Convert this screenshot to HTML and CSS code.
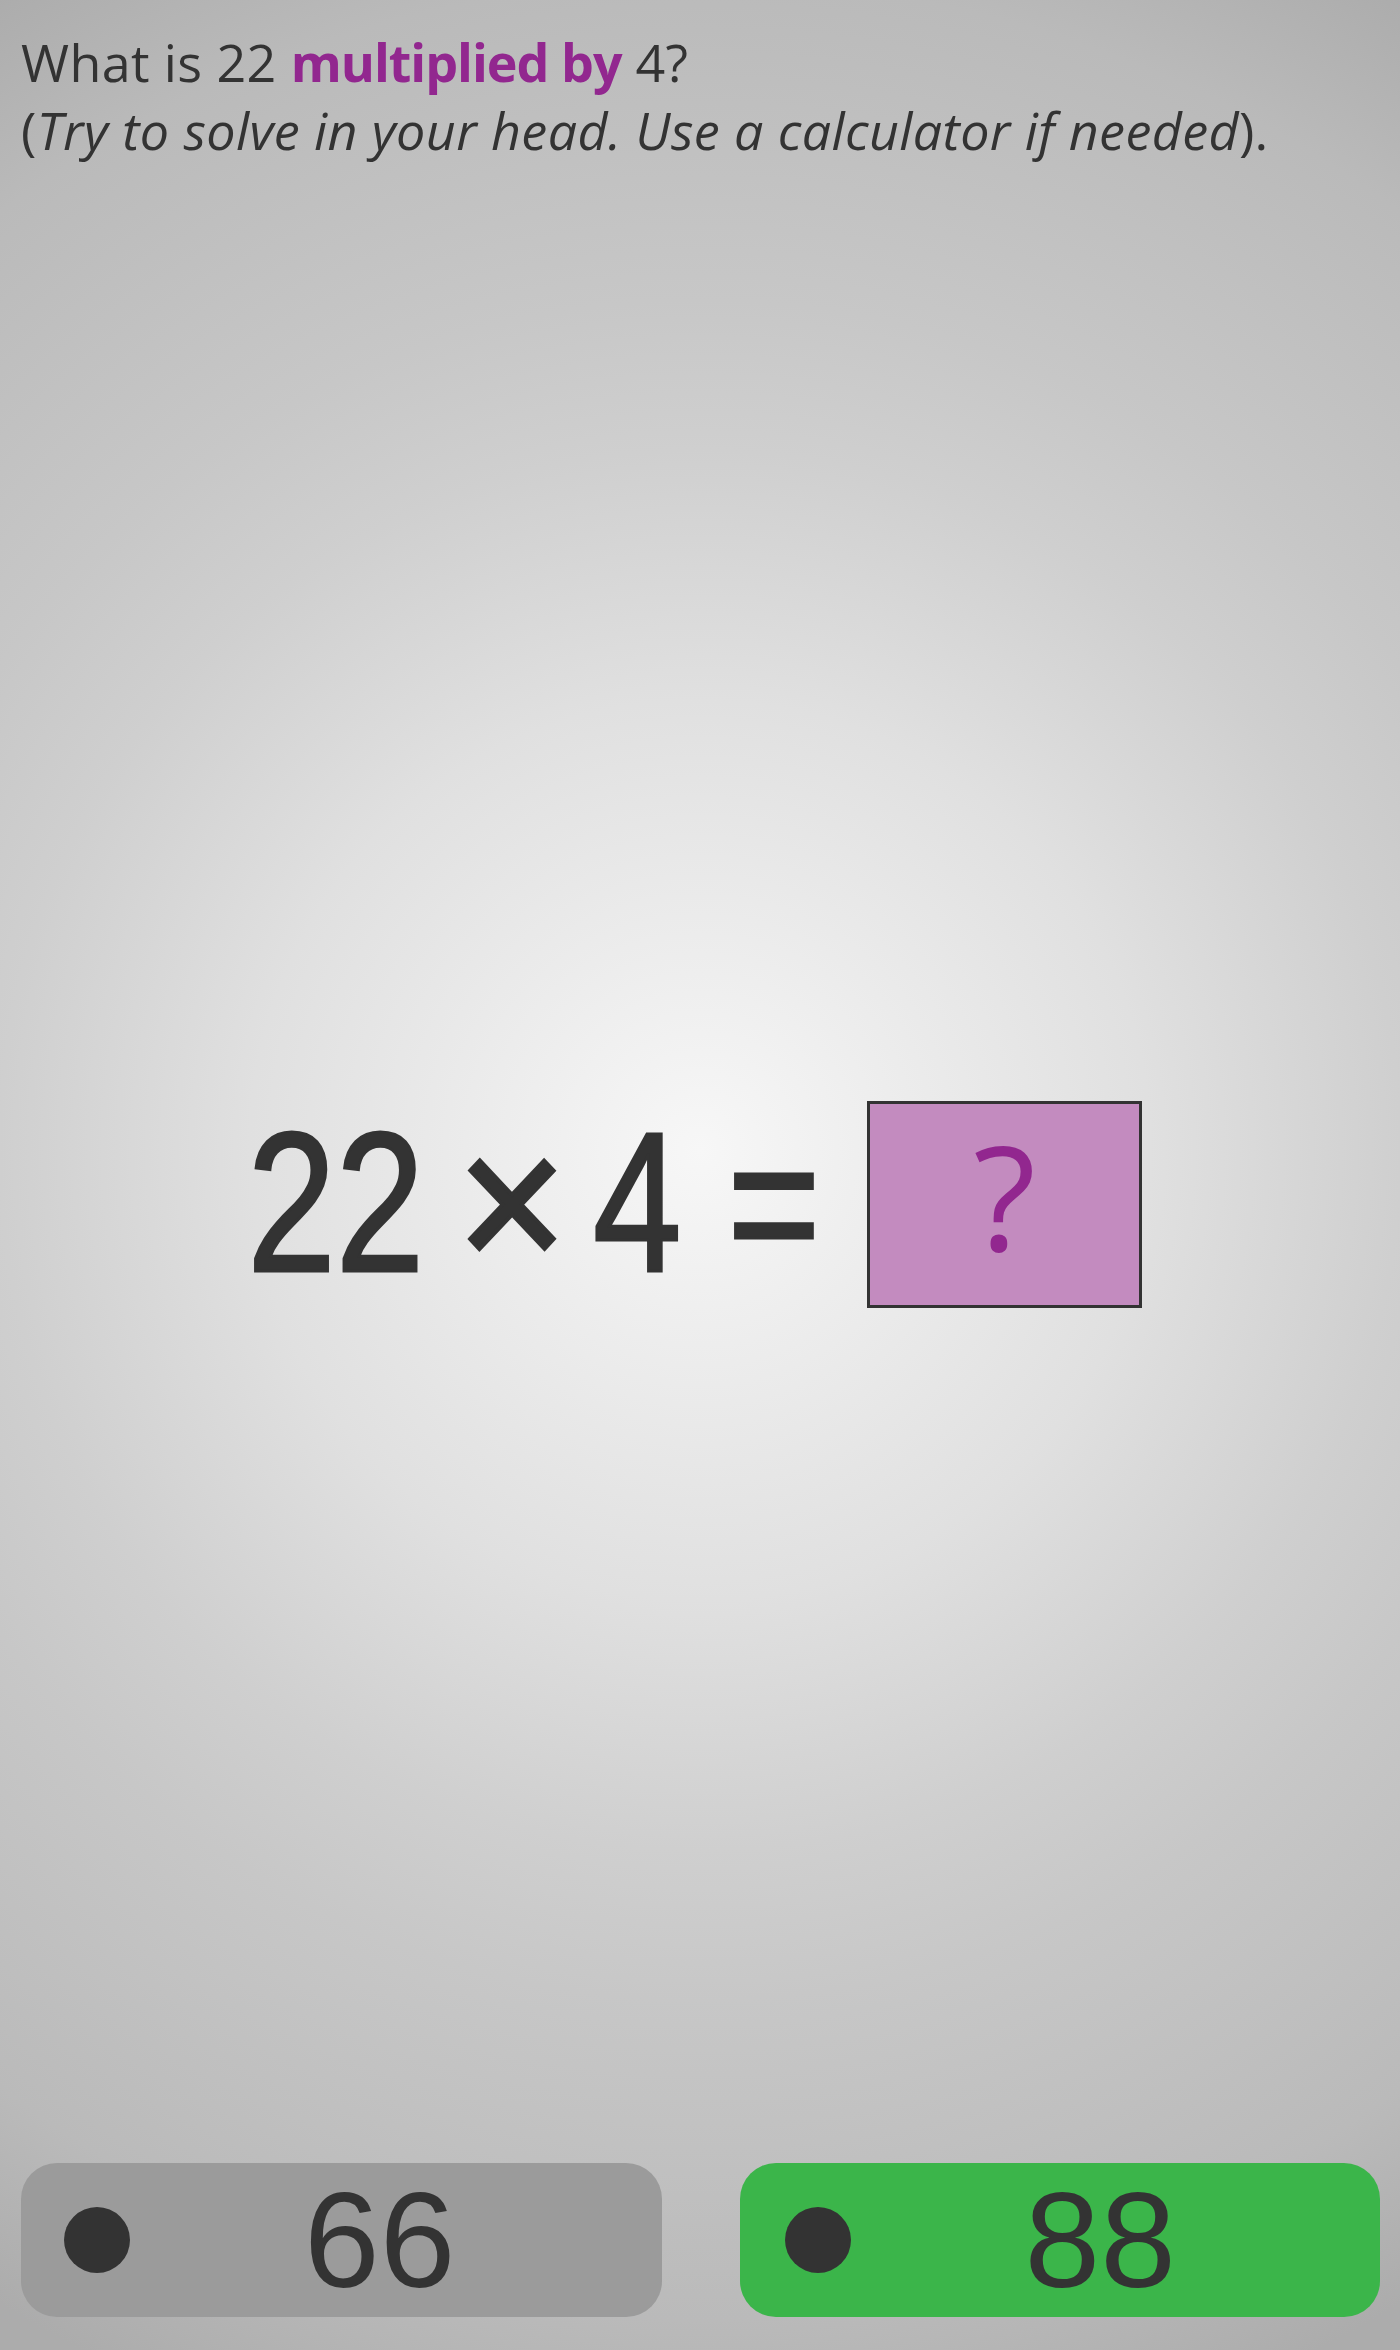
FILE: index.html
```html
<!DOCTYPE html>
<html lang="en">
<head>
<meta charset="utf-8">
<title>Multiplication question</title>
<link rel="stylesheet" href="styles.css">
</head>
<body>
<div class="page">
  <header class="prompt">
    <p class="line">What is 22 <strong class="op">multiplied by</strong> 4?</p>
    <p class="line">(<em>Try to solve in your head. Use a calculator if needed</em>).</p>
  </header>

  <main class="equation">
    <div class="cell c22"><span class="glyph narrow">22</span></div>
    <div class="cell ctimes"><span class="glyph times">×</span></div>
    <div class="cell c4"><span class="glyph narrow">4</span></div>
    <div class="cell ceq"><span class="glyph narrow">=</span></div>
    <div class="answer-box"><span class="qmark">?</span></div>
  </main>

  <footer class="choices">
    <button class="choice choice-wrong" type="button"><span class="dot"></span><span class="value">66</span></button>
    <button class="choice choice-right" type="button"><span class="dot"></span><span class="value">88</span></button>
  </footer>
</div>
</body>
</html>
```

FILE: styles.css
```css
html, body {
  margin: 0;
  padding: 0;
}

body {
  width: 1400px;
  min-height: 2350px;
  background: radial-gradient(circle at 700px 1150px,
    #f7f7f7 0px,
    #e0e0e0 450px,
    #cfcfcf 700px,
    #c7c7c7 850px,
    #bababa 1170px,
    #acacac 1350px);
  font-family: "Open Sans", "Noto Sans", sans-serif;
  color: #333333;
}

.page {
  display: flex;
  flex-direction: column;
  min-height: 2350px;
  box-sizing: border-box;
  padding-bottom: 33px;
}

.prompt {
  padding: 28px 0 0 21px;
}

.line {
  margin: 0;
  font-size: 52px;
  line-height: 68px;
  letter-spacing: 0.4px;
  white-space: nowrap;
}

.op {
  color: #92278f;
  font-weight: 700;
  letter-spacing: -1px;
}

.line em {
  font-style: italic;
}

.equation {
  margin-top: 937px;
  display: flex;
  align-items: center;
  justify-content: center;
  padding-right: 8px;
  height: 207px;
}

.cell {
  display: flex;
  justify-content: center;
  align-items: center;
  height: 207px;
}

.glyph {
  display: inline-block;
  font-family: "Liberation Sans", Arial, sans-serif;
  font-weight: 400;
  font-size: 199px;
  line-height: 1;
  color: #333333;
  -webkit-text-stroke: 3px #333333;
  white-space: nowrap;
  margin-top: -4px;
}

.narrow {
  transform: scaleX(0.8);
}

.times {
  font-size: 198px;
  transform: scaleX(0.95);
  -webkit-text-stroke: 4px #333333;
}

.c22 { width: 171px; margin-right: 42px; }
.ctimes { width: 97px; margin-right: 37px; }
.c4 { width: 81px; margin-right: 57px; }
.ceq { width: 78px; margin-right: 54px; }

.answer-box {
  box-sizing: border-box;
  width: 275px;
  height: 207px;
  border: 3px solid #333333;
  background: #c38bbf;
  display: flex;
  align-items: center;
  justify-content: center;
}

.qmark {
  font-family: "Open Sans", "Noto Sans", sans-serif;
  font-size: 145px;
  line-height: 1;
  color: #92278f;
  margin-top: -20px;
}

.choices {
  margin-top: auto;
  display: grid;
  grid-template-columns: 1fr 1fr;
  column-gap: 78px;
  padding: 0 20px 0 21px;
}

.choice {
  height: 154px;
  border: none;
  border-radius: 36px;
  display: flex;
  align-items: center;
  padding: 0 0 0 43px;
  margin: 0;
  cursor: pointer;
  font: inherit;
}

.choice-wrong {
  background: #9b9b9b;
}

.choice-right {
  background: #3bb54a;
  padding-left: 45px;
}

.dot {
  width: 66px;
  height: 66px;
  border-radius: 50%;
  background: #333333;
  flex: none;
}

.value {
  margin-left: 174px;
  font-family: "Liberation Sans", Arial, sans-serif;
  font-size: 136px;
  line-height: 1;
  color: #333333;
}
```
